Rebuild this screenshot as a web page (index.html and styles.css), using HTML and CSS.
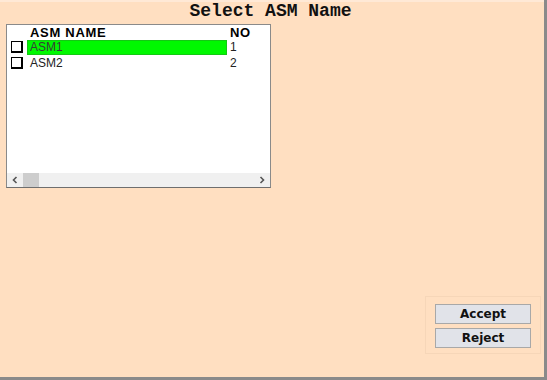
FILE: index.html
```html
<!DOCTYPE html>
<html lang="en">
<head>
    <meta charset="UTF-8">
    <title>Select ASM Name</title>
    <link rel="stylesheet" href="styles.css">
</head>
<body>
    <div class="window">
        <div class="title">Select ASM Name</div>

        <div class="listbox">
            <div class="row head">
                <span class="check-cell"></span>
                <span class="name-cell">ASM NAME</span>
                <span class="no-cell">NO</span>
            </div>
            <div class="row">
                <span class="check-cell"><span class="check"></span></span>
                <span class="name-cell selected">ASM1</span>
                <span class="no-cell">1</span>
            </div>
            <div class="row">
                <span class="check-cell"><span class="check"></span></span>
                <span class="name-cell">ASM2</span>
                <span class="no-cell">2</span>
            </div>

            <div class="hscroll">
                <span class="arrow">
                    <svg width="6" height="8" viewBox="0 0 6 8"><path d="M4.5 1 L1.5 4 L4.5 7" fill="none" stroke="#555" stroke-width="1.6"/></svg>
                </span>
                <span class="thumb"></span>
                <span class="track"></span>
                <span class="arrow">
                    <svg width="6" height="8" viewBox="0 0 6 8"><path d="M1.5 1 L4.5 4 L1.5 7" fill="none" stroke="#555" stroke-width="1.6"/></svg>
                </span>
            </div>
        </div>

        <div class="footer">
            <div class="actions">
                <button>Accept</button>
                <button>Reject</button>
            </div>
        </div>
    </div>
</body>
</html>
```

FILE: styles.css
```css
body {
    margin: 0;
    background-color: #ffdfc1;
    font-family: "Liberation Sans", Arial, sans-serif;
}
.window {
    width: 544px;
    height: 377px;
    border-right: 3px solid #8a8a8a;
    border-bottom: 3px solid #8a8a8a;
    background-color: #ffdfc1;
    box-shadow: inset 0 2px 0 #ffe9d6;
    display: flex;
    flex-direction: column;
}
.title {
    height: 24px;
    line-height: 22px;
    text-align: center;
    padding-right: 3px;
    font-family: "Liberation Mono", "Courier New", monospace;
    font-weight: bold;
    font-size: 18px;
    color: #111;
}
.listbox {
    margin-left: 6px;
    width: 265px;
    height: 164px;
    box-sizing: border-box;
    border: 1px solid #8a8a8a;
    border-bottom-color: #6e6e6e;
    background-color: white;
    display: flex;
    flex-direction: column;
}
.row {
    display: flex;
    height: 16px;
    align-items: center;
    font-size: 12px;
    color: #222;
}
.row.head {
    height: 14px;
    font-weight: bold;
    font-size: 13px;
    letter-spacing: 0.7px;
    color: #000;
}
.check-cell {
    width: 20px;
    height: 16px;
    display: flex;
    align-items: center;
    padding-left: 4px;
    box-sizing: border-box;
}
.check {
    width: 9px;
    height: 9px;
    border: 1px solid #000;
    border-right-width: 2px;
    border-bottom-width: 2px;
    background: white;
}
.name-cell {
    width: 200px;
    height: 15px;
    line-height: 15px;
    padding-left: 3px;
    box-sizing: border-box;
}
.name-cell.selected {
    background-color: #00f800;
    border: 1px solid #14c814;
    padding-left: 2px;
    line-height: 13px;
    color: #3a3a3a;
}
.no-cell {
    padding-left: 3px;
}
.hscroll {
    margin-top: auto;
    height: 14px;
    background-color: #f0f0f0;
    display: flex;
    align-items: center;
}
.arrow {
    width: 16px;
    height: 14px;
    display: flex;
    align-items: center;
    justify-content: center;
}
.thumb {
    width: 16px;
    height: 14px;
    background-color: #cdcdcd;
}
.track {
    flex: 1;
}
.footer {
    margin-top: auto;
    display: flex;
    justify-content: flex-end;
    padding-right: 3px;
    padding-bottom: 23px;
}
.actions {
    width: 116px;
    height: 58px;
    box-sizing: border-box;
    border: 1px solid #f6d6b8;
    padding: 7px 0 0 9px;
    display: flex;
    flex-direction: column;
    gap: 4px;
}
button {
    width: 96px;
    height: 20px;
    padding: 0;
    border: 1px solid #a8a8a8;
    background-color: #e1e3e9;
    font-family: "DejaVu Sans", Tahoma, sans-serif;
    font-weight: bold;
    font-size: 12px;
    color: #111;
}
```
